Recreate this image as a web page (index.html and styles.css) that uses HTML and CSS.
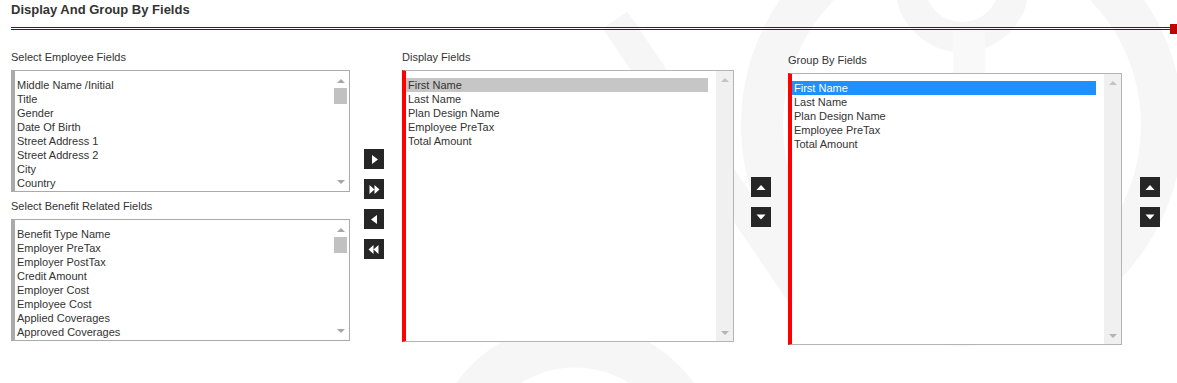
FILE: index.html
```html
<!DOCTYPE html>
<html lang="en">
<head>
  <meta charset="UTF-8" />
  <title>Display And Group By Fields</title>
  <link rel="stylesheet" href="styles.css">
</head>
<body>
<div class="page">

  <!-- faint logo watermark behind the form -->
  <svg class="watermark" width="1177" height="383" viewBox="0 0 1177 383">
    <circle cx="962" cy="-15" r="52" fill="none" stroke="#f6f6f6" stroke-width="30" />
    <circle cx="962" cy="125" r="200" fill="none" stroke="#f6f6f6" stroke-width="42" />
    <rect x="953" y="30" width="32" height="260" fill="#f9f9f9" />
    <circle cx="575" cy="470" r="125" fill="none" stroke="#f6f6f6" stroke-width="45" />
    <path d="M615 20 L805 300" stroke="#f6f6f6" stroke-width="30" />
  </svg>

  <h2 class="section-title">Display And Group By Fields</h2>
  <div class="rule"></div>

  <div class="fields">

    <!-- source lists -->
    <div class="col col-source">
      <div class="field-label">Select Employee Fields</div>
      <div class="listbox">
        <ul class="items">
          <li>Middle Name /Initial</li>
          <li>Title</li>
          <li>Gender</li>
          <li>Date Of Birth</li>
          <li>Street Address 1</li>
          <li>Street Address 2</li>
          <li>City</li>
          <li>Country</li>
        </ul>
        <div class="scrollbar plain">
          <span class="arrow up"></span>
          <span class="thumb"></span>
          <span class="arrow down"></span>
        </div>
      </div>

      <div class="field-label second">Select Benefit Related Fields</div>
      <div class="listbox">
        <ul class="items">
          <li>Benefit Type Name</li>
          <li>Employer PreTax</li>
          <li>Employer PostTax</li>
          <li>Credit Amount</li>
          <li>Employer Cost</li>
          <li>Employee Cost</li>
          <li>Applied Coverages</li>
          <li>Approved Coverages</li>
        </ul>
        <div class="scrollbar plain">
          <span class="arrow up"></span>
          <span class="thumb"></span>
          <span class="arrow down"></span>
        </div>
      </div>
    </div>

    <!-- move buttons -->
    <div class="btn-col move-btns">
      <div class="icon-btn">
        <svg width="20" height="20"><path d="M8 6 L14 10.5 L8 15 Z" fill="#fff" /></svg>
      </div>
      <div class="icon-btn">
        <svg width="20" height="20"><path d="M5.5 6 L10.5 10.5 L5.5 15 Z M10.5 6 L15.5 10.5 L10.5 15 Z" fill="#fff" /></svg>
      </div>
      <div class="icon-btn">
        <svg width="20" height="20"><path d="M13 6 L7 10.5 L13 15 Z" fill="#fff" /></svg>
      </div>
      <div class="icon-btn">
        <svg width="20" height="20"><path d="M9.5 6 L4.5 10.5 L9.5 15 Z M14.5 6 L9.5 10.5 L14.5 15 Z" fill="#fff" /></svg>
      </div>
    </div>

    <!-- display fields -->
    <div class="col col-display">
      <div class="field-label">Display Fields</div>
      <div class="listbox tall marked">
        <ul class="items">
          <li class="picked">First Name</li>
          <li>Last Name</li>
          <li>Plan Design Name</li>
          <li>Employee PreTax</li>
          <li>Total Amount</li>
        </ul>
        <div class="scrollbar track">
          <span class="arrow up"></span>
          <span class="arrow down"></span>
        </div>
      </div>
    </div>

    <div class="btn-col order-btns">
      <div class="icon-btn">
        <svg width="20" height="20"><path d="M5.5 13 L10 8 L14.5 13 Z" fill="#fff" /></svg>
      </div>
      <div class="icon-btn">
        <svg width="20" height="20"><path d="M5.5 7.5 L14.5 7.5 L10 12.5 Z" fill="#fff" /></svg>
      </div>
    </div>

    <!-- group by fields -->
    <div class="col col-group">
      <div class="field-label">Group By Fields</div>
      <div class="listbox tall marked">
        <ul class="items">
          <li class="selected">First Name</li>
          <li>Last Name</li>
          <li>Plan Design Name</li>
          <li>Employee PreTax</li>
          <li>Total Amount</li>
        </ul>
        <div class="scrollbar track">
          <span class="arrow up"></span>
          <span class="arrow down"></span>
        </div>
      </div>
    </div>

    <div class="btn-col order-btns">
      <div class="icon-btn">
        <svg width="20" height="20"><path d="M5.5 13 L10 8 L14.5 13 Z" fill="#fff" /></svg>
      </div>
      <div class="icon-btn">
        <svg width="20" height="20"><path d="M5.5 7.5 L14.5 7.5 L10 12.5 Z" fill="#fff" /></svg>
      </div>
    </div>

  </div>
</div>
</body>
</html>
```

FILE: styles.css
```css
body {
  margin: 0;
  padding: 0;
  background-color: #fff;
  font-family: 'Liberation Sans', Arial, sans-serif;
  color: #333;
}

.page {
  position: relative;
  width: 1177px;
  height: 383px;
  overflow: hidden;
  padding: 2px 0 0 11px;
  box-sizing: border-box;
}

.watermark {
  position: absolute;
  top: 0;
  left: 0;
  z-index: 0;
}

.section-title,
.rule,
.fields {
  position: relative;
  z-index: 1;
}

.section-title {
  margin: 0;
  font-size: 13px;
  line-height: 16px;
  font-weight: bold;
  color: #333;
}

.rule {
  margin-top: 9px;
  width: 1159px;
  height: 1px;
  border-top: 1px solid #800000;
  border-bottom: 1px solid #800000;
}

.rule::after {
  content: "";
  position: absolute;
  right: -7px;
  top: -4px;
  width: 7px;
  height: 10px;
  background-color: #c00000;
}

.fields {
  display: flex;
  align-items: flex-start;
  margin-top: 20px;
}

.field-label {
  font-size: 11px;
  line-height: 14px;
  margin-bottom: 6px;
}

.field-label.second {
  margin-top: 7px;
}

/* list boxes */
.listbox {
  display: flex;
  background-color: #fff;
  border: 1px solid #aaa;
  border-left: 4px solid #aaa;
  height: 120px;
  box-sizing: content-box;
  overflow: hidden;
}

.listbox.tall {
  height: 270px;
  border-color: #b4b4b4;
}

.listbox.marked {
  border-left-color: #f00;
}

.items {
  list-style: none;
  margin: 7px 8px 0 0;
  padding: 0;
  flex: 1;
  font-size: 11px;
  line-height: 14px;
}

.items li {
  padding-left: 2px;
  white-space: nowrap;
}

.items li.picked {
  background-color: #c6c6c6;
}

.items li.selected {
  background-color: #1e90ff;
  color: #fff;
}

.scrollbar {
  position: relative;
  width: 17px;
  flex-shrink: 0;
}

.scrollbar.track {
  background-color: #f0f0f0;
}

.arrow {
  position: absolute;
  left: 5px;
  width: 0;
  height: 0;
  border-left: 4px solid transparent;
  border-right: 4px solid transparent;
}

.arrow.up {
  top: 8px;
  border-bottom: 4px solid #a6a6a6;
}

.arrow.down {
  bottom: 7px;
  border-top: 4px solid #a6a6a6;
}

.listbox.tall .arrow.up {
  top: 7px;
  border-bottom-color: #c4c4c4;
}

.listbox.tall .arrow.down {
  bottom: 6px;
  border-top-color: #b4b4b4;
}

.thumb {
  position: absolute;
  top: 17px;
  left: 2px;
  width: 13px;
  height: 16px;
  background-color: #c1c1c1;
}

.col-source {
  width: 339px;
}

.col-display {
  width: 332px;
}

.col-group {
  width: 334px;
  margin-top: 3px;
}

/* buttons */
.btn-col {
  display: flex;
  flex-direction: column;
  gap: 10px;
}

.move-btns {
  margin: 99px 18px 0 14px;
}

.order-btns {
  margin: 127px 17px 0 17px;
}

.order-btns:last-child {
  margin-left: 18px;
}

.icon-btn {
  width: 20px;
  height: 20px;
  background-color: #262626;
  cursor: pointer;
}

.icon-btn svg {
  display: block;
}
```
